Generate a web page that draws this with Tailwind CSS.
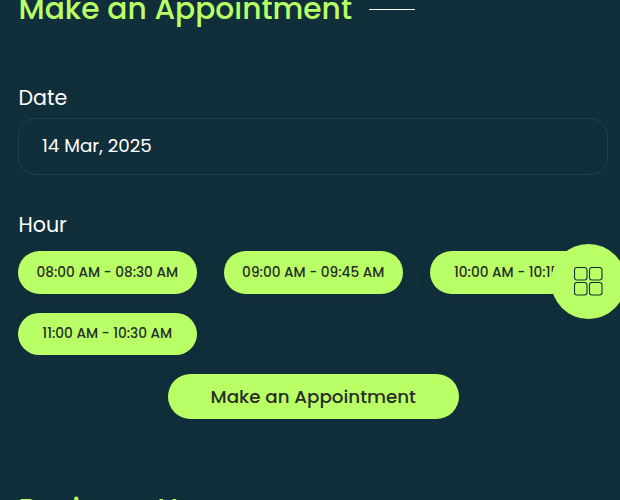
<!DOCTYPE html>
<html lang="en">

<head>
    <meta charset="UTF-8">
    <meta name="viewport" content="width=device-width, initial-scale=1.0">
    <title>Make an Appointment</title>
    <script src="https://cdn.jsdelivr.net/npm/@tailwindcss/browser@4"></script>
</head>

<body class="relative h-screen overflow-hidden bg-[#112f3b] pl-[18px] pr-3 font-[Poppins,Inter,sans-serif] text-white">
    <div class="flex h-4 items-center gap-[17px]">
        <h2 class="w-[334px] whitespace-nowrap pt-0.5 pl-[0.5px] text-[29.7px] leading-4 font-medium text-[#b9ff66]">Make an Appointment</h2>
        <span class="mt-[3px] h-px w-[46px] bg-white"></span>
    </div>

    <div class="mt-[66px]">
        <label class="block pl-[0.5px] text-[20.6px] leading-8">Date</label>
        <div class="mt-1 flex h-[57px] items-center rounded-[18px] border border-[#20414b] px-[23px] pb-0.5 text-[18.3px]">14 Mar, 2025</div>
    </div>

    <div class="mt-[34px]">
        <label class="block pl-[0.5px] text-[20.6px] leading-8">Hour</label>
        <div class="mt-2.5 grid grid-cols-[178.5px_178.5px_178.5px] gap-x-[27.5px] gap-y-[19px] text-[13.7px] font-medium text-[#292d24]">
            <button class="h-[43px] rounded-full bg-[#b9ff66] whitespace-nowrap pt-px shadow-[0_8px_20px_rgba(0,0,0,0.05)]">08:00 AM - 08:30 AM</button>
            <button class="h-[43px] rounded-full bg-[#b9ff66] whitespace-nowrap pt-px shadow-[0_8px_20px_rgba(0,0,0,0.05)]">09:00 AM - 09:45 AM</button>
            <button class="h-[43px] rounded-full bg-[#b9ff66] whitespace-nowrap pt-px shadow-[0_8px_20px_rgba(0,0,0,0.05)]">10:00 AM - 10:15 AM</button>
            <button class="h-[42px] rounded-full bg-[#b9ff66] whitespace-nowrap pt-px shadow-[0_8px_20px_rgba(0,0,0,0.05)]">11:00 AM - 10:30 AM</button>
        </div>
    </div>

    <button class="mt-[19px] ml-[150px] block h-[45px] w-[290.5px] rounded-full bg-[#b9ff66] text-[18.3px] font-medium text-[#292d24] shadow-[0_8px_20px_rgba(0,0,0,0.05)]">Make an Appointment</button>

    <h2 class="mt-[83px] pl-[0.5px] whitespace-nowrap text-[29.7px] leading-4 font-medium text-[#b9ff66]">Business Hours</h2>

    <!-- floating menu -->
    <button class="absolute top-[244.4px] left-[551.4px] flex size-[74.4px] items-center justify-center rounded-full bg-[#b9ff66] pt-px pl-px">
        <svg class="size-[30px]" viewBox="0 0 30 30" fill="none" stroke="#112f3b" stroke-width="1.1">
            <rect x="0.5" y="0.5" width="12.5" height="12.5" rx="2.5" />
            <rect x="15.5" y="0.5" width="12.5" height="12.5" rx="2.5" />
            <rect x="0.5" y="15.5" width="12.5" height="12.5" rx="2.5" />
            <rect x="15.5" y="15.5" width="12.5" height="12.5" rx="2.5" />
        </svg>
    </button>
</body>

</html>
